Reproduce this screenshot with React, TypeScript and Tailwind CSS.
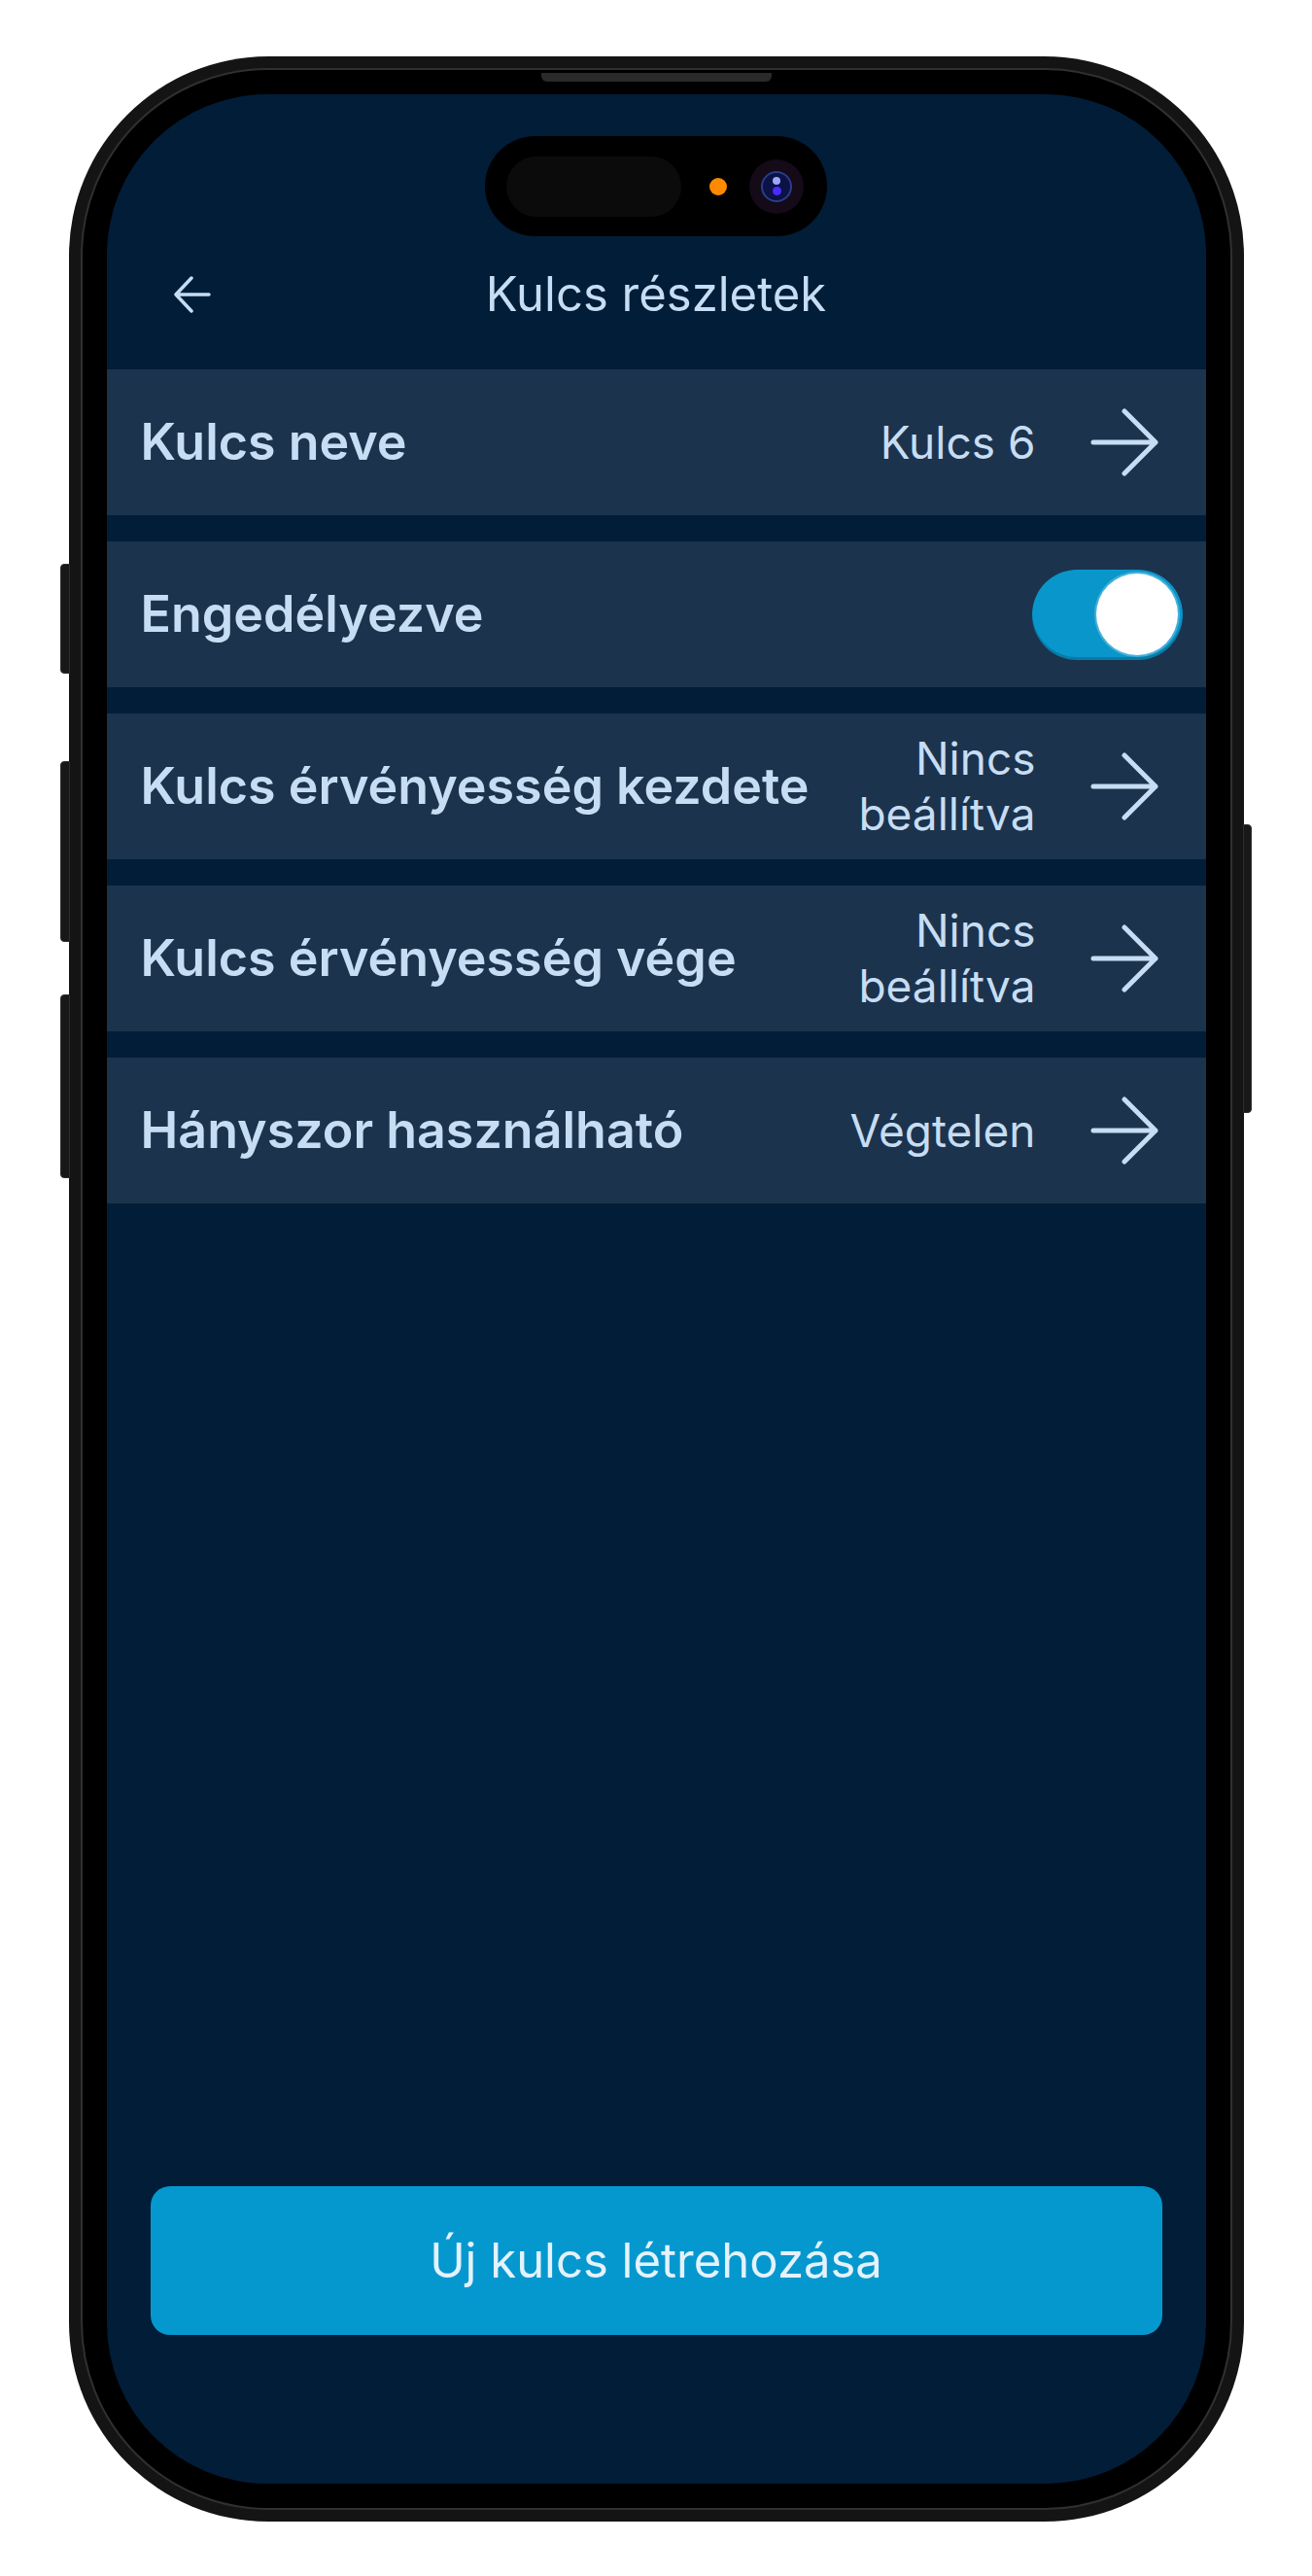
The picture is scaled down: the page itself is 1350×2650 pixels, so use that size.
import React, { useState } from "react";

const rows = [
  { label: "Kulcs neve", value: ["Kulcs 6"] },
  { label: "Engedélyezve", toggle: true },
  { label: "Kulcs érvényesség kezdete", value: ["Nincs", "beállítva"] },
  { label: "Kulcs érvényesség vége", value: ["Nincs", "beállítva"] },
  { label: "Hányszor használható", value: ["Végtelen"] },
];

function ArrowRight() {
  return (
    <svg width="70" height="70" viewBox="0 0 70 70" fill="none" className="shrink-0">
      <path
        d="M3 35H67M35 3L67 35L35 67"
        stroke="#c6ddf3"
        strokeWidth="5"
        strokeLinecap="round"
        strokeLinejoin="round"
      />
    </svg>
  );
}

function ArrowLeft() {
  return (
    <svg width="38" height="38" viewBox="0 0 38 38" fill="none">
      <path
        d="M36 19H2M18 2L2 19L18 36"
        stroke="#c6ddf3"
        strokeWidth="3.5"
        strokeLinecap="round"
        strokeLinejoin="round"
      />
    </svg>
  );
}

function Toggle({ on, onChange }: { on: boolean; onChange: () => void }) {
  return (
    <button
      onClick={onChange}
      className={`flex h-[93px] w-[155px] items-center rounded-full px-[5px] shadow-[inset_0_-3px_0_rgba(0,0,0,0.18)] ${
        on ? "justify-end bg-[#0996cb]" : "justify-start bg-[#3a4f66]"
      }`}
    >
      <span className="h-[84px] w-[84px] rounded-full bg-white shadow-[0_0_0_2px_rgba(255,255,255,0.25)]" />
    </button>
  );
}

function DynamicIsland() {
  return (
    <div className="mx-auto flex h-[103px] w-[352px] items-center rounded-full bg-black pl-[22px]">
      <div className="h-[62px] w-[180px] rounded-full bg-[#0b0b0b]" />
      <div className="ml-[29px] h-[18px] w-[18px] rounded-full bg-[#ff8a00]" />
      <div className="ml-[23px] flex h-[56px] w-[56px] items-center justify-center rounded-full bg-[#140a18]">
        <div className="flex h-[32px] w-[32px] flex-col items-center justify-center gap-[2px] rounded-full border-2 border-[#2b3c8a] bg-[#0c1246]">
          <div className="h-[8px] w-[8px] rounded-full bg-[#9aa6ff]" />
          <div className="h-[9px] w-[9px] rounded-full bg-[#4a2cff]" />
        </div>
      </div>
    </div>
  );
}

export default function App() {
  const [enabled, setEnabled] = useState(true);

  return (
    <div className="min-h-[2650px] bg-white pt-[58px] font-[Inter,sans-serif]">
      <div className="relative mx-auto h-[2536px] w-[1209px] rounded-[205px] bg-[#141414] p-[12px]">
        {/* side buttons */}
        <div className="absolute left-[-9px] top-[522px] h-[113px] w-[10px] rounded-l-[4px] border border-[#2e2e2e] bg-[#181818]" />
        <div className="absolute left-[-9px] top-[725px] h-[186px] w-[10px] rounded-l-[4px] border border-[#2e2e2e] bg-[#181818]" />
        <div className="absolute left-[-9px] top-[965px] h-[189px] w-[10px] rounded-l-[4px] border border-[#2e2e2e] bg-[#181818]" />
        <div className="absolute right-[-8px] top-[790px] h-[297px] w-[9px] rounded-r-[4px] border border-[#2e2e2e] bg-[#181818]" />
        {/* speaker */}
        <div className="absolute left-[486px] top-[17px] h-[9px] w-[237px] rounded-b-[6px] bg-[#2a2a2a]" />

        <div className="h-full w-full rounded-[193px] border-2 border-[#303030] bg-black p-[25px]">
          <div className="flex h-full w-full flex-col overflow-hidden rounded-[165px] bg-[#021d38] pb-[153px] pt-[43px]">
            <DynamicIsland />

            <div className="mt-[10px] grid h-[100px] grid-cols-[1fr_auto_1fr] items-center">
              <button className="justify-self-start pl-[69px]">
                <ArrowLeft />
              </button>
              <h1 className="text-[49px] font-normal text-[#c6ddf3]">Kulcs részletek</h1>
              <div />
            </div>

            <div className="mt-[27px] flex flex-col gap-[27px]">
              {rows.map((row) => (
                <div
                  key={row.label}
                  className={`flex h-[150px] items-center justify-between bg-[#1c334d] pl-[35px] ${
                    row.toggle ? "pr-[24px]" : "pr-[49px]"
                  }`}
                >
                  <span className="text-[52px] font-semibold text-[#c6ddf3]">{row.label}</span>
                  {row.toggle ? (
                    <Toggle on={enabled} onChange={() => setEnabled(!enabled)} />
                  ) : (
                    <div className="flex items-center">
                      <div className="flex flex-col items-end text-[46px] leading-[57px] text-[#c6ddf3]">
                        {row.value?.map((v) => (
                          <span key={v}>{v}</span>
                        ))}
                      </div>
                      <div className="ml-[56px]">
                        <ArrowRight />
                      </div>
                    </div>
                  )}
                </div>
              ))}
            </div>

            <button className="mx-[45px] mt-auto h-[153px] rounded-[20px] bg-[#0598cf] text-[49px] text-[#e4f2fb]">
              Új kulcs létrehozása
            </button>
          </div>
        </div>
      </div>
    </div>
  );
}
